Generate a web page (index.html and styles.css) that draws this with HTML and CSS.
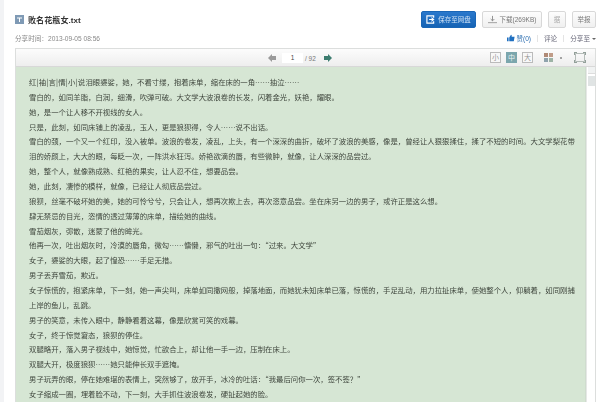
FILE: index.html
```html
<!DOCTYPE html>
<html lang="zh-CN">
<head>
<meta charset="utf-8">
<title>败名花瓶女.txt</title>
<link rel="stylesheet" href="styles.css">
</head>
<body>
<div class="page">
  <header class="head">
    <div class="title-wrap">
      <svg class="file-icon" viewBox="0 0 9 9" width="9" height="9"><rect width="9" height="9" fill="#7f9ab5"/><path d="M2 2.500h5v1H5v3.500H4V3.500H2z" fill="#fff"/></svg>
      <h1 class="title">败名花瓶女.txt</h1>
    </div>
    <div class="actions">
      <a class="btn btn-save">
        <svg viewBox="0 0 10 10" width="9" height="9"><path d="M8.500 3V1H1v8h7.500V7" fill="none" stroke="#fff" stroke-width="1.300"/><path d="M3.500 5h4M6 3l2.500 2L6 7" fill="none" stroke="#fff" stroke-width="1.200"/></svg>
        保存至网盘
      </a>
      <a class="btn btn-down">
        <svg viewBox="0 0 10 10" width="9" height="9"><path d="M5 1v5.500M3 4.500l2 2 2-2" fill="none" stroke="#888" stroke-width="1"/><path d="M0 8.500h10" fill="none" stroke="#999" stroke-width="1"/></svg>
        下载(269KB)
      </a>
      <a class="btn btn-small">据</a>
      <a class="btn btn-report">举报</a>
    </div>
  </header>
  <div class="meta">
    <span class="date">分享时间：2013-09-05 08:56</span>
    <div class="social">
      <span class="like">
        <svg viewBox="0 0 10 10" width="8" height="8"><path d="M0 4.500h2V9H0zM2.800 4.500 5 1c1 0 1 1 .8 2.500H9.500L8.500 9H2.800z" fill="#1f6fc0"/></svg>赞(0)
      </span>
      <span class="sep"></span>
      <span>评论</span>
      <span class="sep"></span>
      <span>分享至<i class="caret"></i></span>
    </div>
  </div>
  <section class="viewer">
    <div class="toolbar">
      <div class="pager">
        <svg viewBox="0 0 8 8" width="8" height="8"><path d="M0 4 4 0v2h4v4H4v2z" fill="#9a9a9a"/></svg>
        <span class="page-input">1</span>
        <span class="page-total">/ 92</span>
        <svg viewBox="0 0 8 8" width="8" height="8"><path d="M8 4 4 0v2H0v4h4v2z" fill="#3d7d70"/></svg>
      </div>
      <div class="tools">
        <span class="size">小</span>
        <span class="size size-on">中</span>
        <span class="size">大</span>
        <span class="swatches"><i class="sw-a"></i><i class="sw-b"></i><i class="sw-c"></i><i class="sw-d"></i></span>
        <i class="dot"></i>
        <svg class="full" viewBox="0 0 12 11" width="12" height="11"><path d="M1.500 1.500h9v8h-9z" fill="none" stroke="#b4bcb8"/><path d="M0 0h3v1H1v2H0zM9 0h3v3h-1V1H9zM0 8h1v2h2v1H0zM11 8h1v3H9v-1h2z" fill="#93a09a"/></svg>
      </div>
    </div>
    <div class="body">
      <article class="text">
        <p><span class="brand">红|袖|言|情|小|说</span>泪眼婆娑，她，不看寸缕，抱着床单，缩在床的一角……抽泣……</p>
        <p>雪白的，如同羊脂，白润，细滑，吹弹可破。大文学大波浪卷的长发，闪着金光，妖艳，耀眼。</p>
        <p>她，是一个让人移不开视线的女人。</p>
        <p>只是，此刻，如同床铺上的凌乱，玉人，更是狼狈得，令人……说不出话。</p>
        <p>雪白的颈，一个又一个红印，没入被单。波浪的卷发，凌乱，上头，有一个深深的曲折，破坏了波浪的美感，像是，曾经让人狠狠揉住，揉了不短的时间。大文学梨花带泪的娇颜上，大大的眼，每眨一次，一阵洪水狂泻。娇艳欲滴的唇，有些微肿，就像，让人深深的品尝过。</p>
        <p>她，整个人，就像熟成熟、红艳的果实，让人忍不住，想要品尝。</p>
        <p>她，此刻，凄惨的模样，就像，已经让人彻底品尝过。</p>
        <p>狼狈，丝毫不破坏她的美，她的可怜兮兮，只会让人，想再次欺上去，再次恣意品尝。坐在床另一边的男子，或许正是这么想。</p>
        <p>肆无禁忌的目光，恣情的透过薄薄的床单，描绘她的曲线。</p>
        <p>雪茄烟灰，弥散，迷蒙了他的眸光。</p>
        <p>他再一次，吐出烟灰时，冷漠的唇角，微勾……慵懒，邪气的吐出一句：“过来。大文学”</p>
        <p>女子，婆娑的大眼，起了惶恐……手足无措。</p>
        <p>男子丢弃雪茄，欺近。</p>
        <p>女子惊慌的，抱紧床单，下一刻，她一声尖叫，床单如同撒网般，掉落地面，而她犹未知床单已落，惊慌的，手足乱动，用力拉扯床单，使她整个人，仰躺着，如同刚捕上岸的鱼儿，乱跳。</p>
        <p>男子的笑意，未传入眼中，静静看着这幕，像是欣赏可笑的戏幕。</p>
        <p>女子，终于惊觉窘态，狼狈的停住。</p>
        <p>双腿略开，落入男子视线中，她惊觉，忙欲合上，却让他一手一边，压制在床上。</p>
        <p>双腿大开，极度狼狈……她只能伸长双手遮掩。</p>
        <p>男子玩弄的眼，停在她难堪的表情上，突然够了，放开手，冰冷的吐话：“我最后问你一次，签不签？”</p>
        <p>女子缩成一圈，埋着脸不动，下一刻，大手抓住波浪卷发，硬扯起她的脸。</p>
      </article>
      <div class="scrollbar">
        <span class="sb-arrow"></span>
        <span class="sb-thumb"></span>
      </div>
    </div>
  </section>
</div>
</body>
</html>
```
FILE: styles.css
```css
* { box-sizing: border-box; }
html, body { margin: 0; padding: 0; height: 402px; overflow: hidden; background: #fff; }
body {
  font-family: "Liberation Sans", "Noto Sans CJK SC", sans-serif;
  color: #666;
  border-left: 4px solid #f2f3f5;
}
.page { padding: 10px 4px 0 11px; width: 596px; filter: blur(0.25px); }
.head { display: flex; justify-content: space-between; align-items: center; height: 18px; }
.title-wrap { display: flex; align-items: center; gap: 4px; }
.file-icon { display: block; }
.title { margin: 0; font-size: 8.100px; font-weight: 700; color: #333; }
.actions { display: flex; gap: 6px; align-items: center; }
.btn { height: 17px; display: flex; align-items: center; justify-content: center; gap: 3px; font-size: 6.500px; border: 1px solid #d8d8d8; background: linear-gradient(#fdfdfd, #f0f0f0); color: #777; border-radius: 2px; }
.btn-save { width: 55px; background: linear-gradient(#2a78cc, #1663b4); border-color: #1a66b6; color: #cfe2f5; }
.btn-down { width: 60px; }
.btn-small { width: 18px; color: #aaa; }
.btn-report { width: 24px; }
.meta { display: flex; justify-content: space-between; align-items: center; height: 12px; margin-top: 4px; font-size: 6.600px; color: #888; }
.social { display: flex; align-items: center; gap: 6px; color: #667; }
.like { display: flex; align-items: center; gap: 1px; color: #2a6db0; }
.sep { width: 1px; height: 7px; background: #e4e4e4; }
.caret { display: inline-block; margin-left: 2px; border: 2px solid transparent; border-top: 2px solid #666; border-bottom: 0; vertical-align: middle; }
.viewer { margin-top: 4px; border: 1px solid #dcdedd; border-bottom: 0; height: 360px; margin-left: 0; }
.toolbar { height: 18px; position: relative; display: flex; justify-content: flex-end; align-items: center; background: linear-gradient(#fcfcfc, #eeeeee); border-bottom: 1px solid #d8d8d8; padding-right: 9px; }
.pager { position: absolute; left: 252px; top: 3px; display: flex; align-items: center; height: 12px; font-size: 6.500px; color: #777; }
.page-input { width: 21px; height: 10px; margin-left: 6px; background: #fff; text-align: center; line-height: 10px; color: #444; }
.page-total { margin: 0 8px 0 2px; }
.tools { display: flex; align-items: center; gap: 5px; }
.size { width: 11px; height: 11px; border: 1px solid #bbb; font-size: 7px; line-height: 9px; text-align: center; color: #999; background: #f8f8f8; }
.size-on { background: #7ba6ad; border-color: #7ba6ad; color: #e8f2f3; }
.swatches { display: grid; grid-template-columns: 4px 4px; grid-template-rows: 4px 4px; gap: 1px; margin-left: 6px; }
.swatches i { display: block; }
.sw-a { background: #b08a76; }
.sw-b { background: #c09c88; }
.sw-c { background: #8fa3ad; }
.sw-d { background: #9db3a6; }
.dot { width: 2px; height: 2px; background: #888; border-radius: 50%; margin-left: 2px; }
.full { display: block; margin-left: 7px; }
.body { display: flex; height: 340px; }
.text { flex: 1; background: #d6e6d4; padding: 8px 10px 0 13px; font-family: "Noto Sans CJK SC", sans-serif; font-size: 7.390px; line-height: 14.860px; color: #3f463d; overflow: hidden; box-shadow: inset -1px 0 0 #cfdcce; }
.text p { margin: 0; }
.brand { letter-spacing: 0.200px; }
.scrollbar { width: 9px; background: #fff; border-left: 1px solid #e6e8e6; display: flex; flex-direction: column; gap: 2px; padding-left: 1px; }
.sb-arrow { height: 7px; background: #f0f2f2; border-bottom: 1px solid #ddd; }
.sb-thumb { height: 10px; background: #e0e4e4; }
```
